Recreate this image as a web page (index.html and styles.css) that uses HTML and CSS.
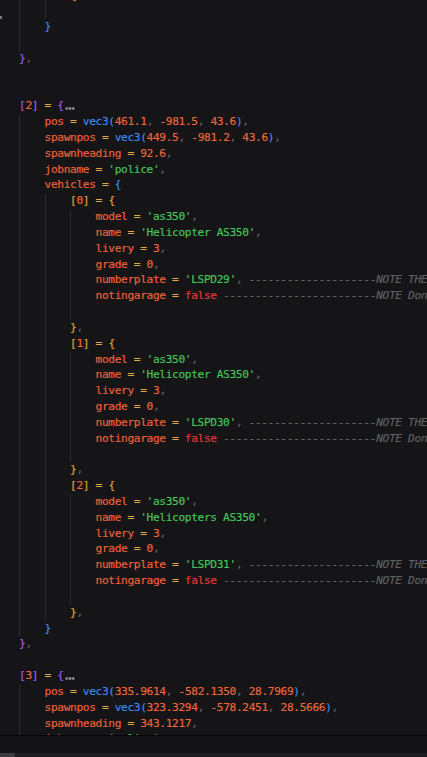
FILE: index.html
```html
<!DOCTYPE html>
<html lang="en">
<head>
<meta charset="utf-8">
<title>Editor</title>
<link rel="stylesheet" href="styles.css">
</head>
<body>
<div class="editor">
  <div class="code">
    <div class="ln"><span class="g"></span><span class="g"></span><span class="t"><span class="b3">{</span><span class="fold"></span></span></div>
    <div class="ln"><span class="g"></span><span class="g"></span></div>
    <div class="ln"><span class="g"></span><span class="t"><span class="b2">}</span></span></div>
    <div class="ln"><span class="g"></span></div>
    <div class="ln"><span class="t"><span class="b1">}</span><span class="c">,</span></span></div>
    <div class="ln"></div>
    <div class="ln"></div>
    <div class="ln"><span class="t"><span class="b1">[</span><span class="n">2</span><span class="b1">]</span> <span class="o">=</span> <span class="b1">{</span><span class="fold"></span></span></div>
    <div class="ln"><span class="g"></span><span class="t"><span class="k">pos</span> <span class="o">=</span> <span class="fn">vec3</span><span class="b2">(</span><span class="n">461.1</span><span class="c">,</span> <span class="n">-981.5</span><span class="c">,</span> <span class="n">43.6</span><span class="b2">)</span><span class="c">,</span></span></div>
    <div class="ln"><span class="g"></span><span class="t"><span class="k">spawnpos</span> <span class="o">=</span> <span class="fn">vec3</span><span class="b2">(</span><span class="n">449.5</span><span class="c">,</span> <span class="n">-981.2</span><span class="c">,</span> <span class="n">43.6</span><span class="b2">)</span><span class="c">,</span></span></div>
    <div class="ln"><span class="g"></span><span class="t"><span class="k">spawnheading</span> <span class="o">=</span> <span class="n">92.6</span><span class="c">,</span></span></div>
    <div class="ln"><span class="g"></span><span class="t"><span class="k">jobname</span> <span class="o">=</span> <span class="s">'police'</span><span class="c">,</span></span></div>
    <div class="ln"><span class="g"></span><span class="t"><span class="k">vehicles</span> <span class="o">=</span> <span class="b2">{</span></span></div>

    <div class="ln"><span class="g"></span><span class="g"></span><span class="t"><span class="b3">[</span><span class="n">0</span><span class="b3">]</span> <span class="o">=</span> <span class="b3">{</span></span></div>
    <div class="ln"><span class="g"></span><span class="g"></span><span class="g"></span><span class="t"><span class="k">model</span> <span class="o">=</span> <span class="s">'as350'</span><span class="c">,</span></span></div>
    <div class="ln"><span class="g"></span><span class="g"></span><span class="g"></span><span class="t"><span class="k">name</span> <span class="o">=</span> <span class="s">'Helicopter AS350'</span><span class="c">,</span></span></div>
    <div class="ln"><span class="g"></span><span class="g"></span><span class="g"></span><span class="t"><span class="k">livery</span> <span class="o">=</span> <span class="n">3</span><span class="c">,</span></span></div>
    <div class="ln"><span class="g"></span><span class="g"></span><span class="g"></span><span class="t"><span class="k">grade</span> <span class="o">=</span> <span class="n">0</span><span class="c">,</span></span></div>
    <div class="ln"><span class="g"></span><span class="g"></span><span class="g"></span><span class="t"><span class="k">numberplate</span> <span class="o">=</span> <span class="s">'LSPD29'</span><span class="c">,</span> <span class="cm">--------------------NOTE THESE MUST BE UNIQUE</span></span></div>
    <div class="ln"><span class="g"></span><span class="g"></span><span class="g"></span><span class="t"><span class="k">notingarage</span> <span class="o">=</span> <span class="f">false</span> <span class="cm">------------------------NOTE Dont change this</span></span></div>
    <div class="ln"><span class="g"></span><span class="g"></span><span class="g"></span></div>
    <div class="ln"><span class="g"></span><span class="g"></span><span class="t"><span class="b3">}</span><span class="c">,</span></span></div>

    <div class="ln"><span class="g"></span><span class="g"></span><span class="t"><span class="b3">[</span><span class="n">1</span><span class="b3">]</span> <span class="o">=</span> <span class="b3">{</span></span></div>
    <div class="ln"><span class="g"></span><span class="g"></span><span class="g"></span><span class="t"><span class="k">model</span> <span class="o">=</span> <span class="s">'as350'</span><span class="c">,</span></span></div>
    <div class="ln"><span class="g"></span><span class="g"></span><span class="g"></span><span class="t"><span class="k">name</span> <span class="o">=</span> <span class="s">'Helicopter AS350'</span><span class="c">,</span></span></div>
    <div class="ln"><span class="g"></span><span class="g"></span><span class="g"></span><span class="t"><span class="k">livery</span> <span class="o">=</span> <span class="n">3</span><span class="c">,</span></span></div>
    <div class="ln"><span class="g"></span><span class="g"></span><span class="g"></span><span class="t"><span class="k">grade</span> <span class="o">=</span> <span class="n">0</span><span class="c">,</span></span></div>
    <div class="ln"><span class="g"></span><span class="g"></span><span class="g"></span><span class="t"><span class="k">numberplate</span> <span class="o">=</span> <span class="s">'LSPD30'</span><span class="c">,</span> <span class="cm">--------------------NOTE THESE MUST BE UNIQUE</span></span></div>
    <div class="ln"><span class="g"></span><span class="g"></span><span class="g"></span><span class="t"><span class="k">notingarage</span> <span class="o">=</span> <span class="f">false</span> <span class="cm">------------------------NOTE Dont change this</span></span></div>
    <div class="ln"><span class="g"></span><span class="g"></span><span class="g"></span></div>
    <div class="ln"><span class="g"></span><span class="g"></span><span class="t"><span class="b3">}</span><span class="c">,</span></span></div>

    <div class="ln"><span class="g"></span><span class="g"></span><span class="t"><span class="b3">[</span><span class="n">2</span><span class="b3">]</span> <span class="o">=</span> <span class="b3">{</span></span></div>
    <div class="ln"><span class="g"></span><span class="g"></span><span class="g"></span><span class="t"><span class="k">model</span> <span class="o">=</span> <span class="s">'as350'</span><span class="c">,</span></span></div>
    <div class="ln"><span class="g"></span><span class="g"></span><span class="g"></span><span class="t"><span class="k">name</span> <span class="o">=</span> <span class="s">'Helicopters AS350'</span><span class="c">,</span></span></div>
    <div class="ln"><span class="g"></span><span class="g"></span><span class="g"></span><span class="t"><span class="k">livery</span> <span class="o">=</span> <span class="n">3</span><span class="c">,</span></span></div>
    <div class="ln"><span class="g"></span><span class="g"></span><span class="g"></span><span class="t"><span class="k">grade</span> <span class="o">=</span> <span class="n">0</span><span class="c">,</span></span></div>
    <div class="ln"><span class="g"></span><span class="g"></span><span class="g"></span><span class="t"><span class="k">numberplate</span> <span class="o">=</span> <span class="s">'LSPD31'</span><span class="c">,</span> <span class="cm">--------------------NOTE THESE MUST BE UNIQUE</span></span></div>
    <div class="ln"><span class="g"></span><span class="g"></span><span class="g"></span><span class="t"><span class="k">notingarage</span> <span class="o">=</span> <span class="f">false</span> <span class="cm">------------------------NOTE Dont change this</span></span></div>
    <div class="ln"><span class="g"></span><span class="g"></span><span class="g"></span></div>
    <div class="ln"><span class="g"></span><span class="g"></span><span class="t"><span class="b3">}</span><span class="c">,</span></span></div>

    <div class="ln"><span class="g"></span><span class="t"><span class="b2">}</span></span></div>
    <div class="ln"><span class="t"><span class="b1">}</span><span class="c">,</span></span></div>
    <div class="ln"></div>
    <div class="ln"><span class="t"><span class="b1">[</span><span class="n">3</span><span class="b1">]</span> <span class="o">=</span> <span class="b1">{</span><span class="fold"></span></span></div>
    <div class="ln"><span class="g"></span><span class="t"><span class="k">pos</span> <span class="o">=</span> <span class="fn">vec3</span><span class="b2">(</span><span class="n">335.9614</span><span class="c">,</span> <span class="n">-582.1350</span><span class="c">,</span> <span class="n">28.7969</span><span class="b2">)</span><span class="c">,</span></span></div>
    <div class="ln"><span class="g"></span><span class="t"><span class="k">spawnpos</span> <span class="o">=</span> <span class="fn">vec3</span><span class="b2">(</span><span class="n">323.3294</span><span class="c">,</span> <span class="n">-578.2451</span><span class="c">,</span> <span class="n">28.5666</span><span class="b2">)</span><span class="c">,</span></span></div>
    <div class="ln"><span class="g"></span><span class="t"><span class="k">spawnheading</span> <span class="o">=</span> <span class="n">343.1217</span><span class="c">,</span></span></div>
    <div class="ln"><span class="g"></span><span class="t"><span class="k">jobname</span> <span class="o">=</span> <span class="s">'police'</span><span class="c">,</span></span></div>
    <div class="ln"><span class="g"></span><span class="t"><span class="k">job</span> <span class="o">=</span> <span class="s">'police'</span><span class="c">,</span></span></div>
  </div>
  <span class="mark"></span>
</div>
<div class="panel"></div>
<div class="hscroll"><div class="thumb"></div></div>
</body>
</html>
```

FILE: styles.css
```css
* { box-sizing: border-box; }

html, body {
  margin: 0;
  padding: 0;
  background: #151518;
  width: 427px;
  height: 757px;
  overflow: hidden;
}

.editor {
  position: relative;
  height: 736px;
  overflow: hidden;
  border-bottom: 1px solid #050506;
}

.code {
  margin-top: -12.5px;
  padding-left: 19px;
  font-family: "DejaVu Sans Mono", "Liberation Mono", monospace;
  font-size: 11.2px;
  letter-spacing: -0.36px;
  line-height: 15.83px;
  color: #cfcfcf;
  -webkit-text-stroke: 0.15px;
}

.ln {
  display: flex;
  height: 15.83px;
  white-space: pre;
}

.g {
  flex: none;
  width: 25.52px;
  border-left: 1px solid #2b2b2f;
}

.t { flex: none; }

.k { color: #f0623a; }
.o { color: #e0a84e; }
.n { color: #f0673b; }
.s { color: #46c85c; }
.f { color: #e8383d; }
.c { color: #626266; }
.fn { color: #3a8ef2; }
.b1 { color: #a05cf6; }
.b2 { color: #3a8ef2; }
.b3 { color: #e4a52f; }
.cm { color: #5f6167; font-style: italic; }

.fold {
  display: inline-block;
  width: 10px;
  height: 3px;
  margin-left: 1px;
  vertical-align: -1px;
  background:
    radial-gradient(circle, #b4b4b4 0.9px, transparent 1.2px) 0 0 / 3.3px 3px repeat-x,
    #3a3a3d;
}

.mark {
  position: absolute;
  left: 0;
  top: 16px;
  width: 2px;
  height: 3px;
  background: #7a7a7a;
}

.panel {
  height: 17px;
  background: #141416;
}

.hscroll {
  height: 4px;
  background: #1d1d20;
}

.thumb {
  width: 15px;
  height: 100%;
  background: #3b3b3e;
}
```
